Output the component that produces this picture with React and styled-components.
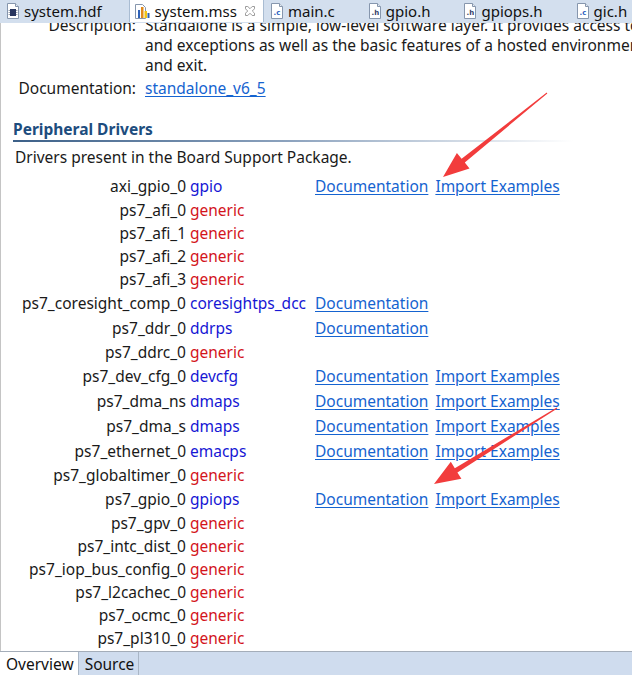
import React from "react";
import styled, { createGlobalStyle } from "styled-components";

const GlobalStyle = createGlobalStyle`
  html, body {
    margin: 0;
    padding: 0;
    background: #ffffff;
    overflow: hidden;
  }
  body {
    font-family: "Noto Sans", "Open Sans", sans-serif;
    font-size: 15px;
    color: #1a1a1a;
  }
`;

const Frame = styled.div`
  position: relative;
  width: 632px;
  height: 675px;
  display: flex;
  flex-direction: column;
  overflow: hidden;
`;

// editor tabs along the top
const TabBar = styled.div`
  height: 23px;
  flex: none;
  display: flex;
  background: #d3dfee;
  white-space: nowrap;
`;

const Tab = styled.div`
  display: flex;
  align-items: center;
  height: 22px;
  box-sizing: border-box;
  padding: ${(p) => (p.$active ? "0 8px 0 5px" : "0 26px 0 5px")};
  background: ${(p) => (p.$active ? "#ffffff" : "transparent")};
  border-left: 1px solid ${(p) => (p.$active ? "#a9bcd2" : "transparent")};
  border-right: 1px solid ${(p) => (p.$active ? "#a9bcd2" : "transparent")};
  color: #111;
  font-size: 15px;
  line-height: 22px;

  > svg {
    flex: none;
    margin-right: 4px;
  }
`;

const CloseBtn = styled.span`
  display: inline-flex;
  margin-left: 8px;
`;

// scrolled form area
const Pane = styled.div`
  flex: 1;
  overflow: hidden;
  border-left: 1px solid #c4c4c4;
  font-size: 15.5px;
`;

const Scroller = styled.div`
  margin-top: -8px;
`;

const InfoGrid = styled.div`
  display: grid;
  grid-template-columns: 135px 1fr;
  column-gap: 9px;
  line-height: 20px;
  white-space: nowrap;
`;

const InfoLabel = styled.div`
  text-align: right;
  margin-top: ${(p) => p.$gap || 0}px;
`;

const InfoValue = styled.div`
  margin-top: ${(p) => p.$gap || 0}px;
`;

const Link = styled.a`
  color: #1563d0;
  text-decoration: underline;
  text-underline-offset: 2px;
  cursor: pointer;
`;

const Section = styled.div`
  margin-top: 21px;
  padding-left: 12px;
`;

const SectionTitle = styled.div`
  font-weight: bold;
  color: #1d4d7e;
  line-height: 20px;
  padding-bottom: 1px;
`;

const TitleRule = styled.div`
  height: 2px;
  width: 560px;
  background: linear-gradient(to right, #3c6088 0%, #8ea4bf 50%, #ffffff 100%);
`;

const SectionText = styled.div`
  margin-top: 5px;
  padding-left: 2px;
  line-height: 20px;
`;

const DriverList = styled.div`
  margin-top: 6px;
`;

const DriverRow = styled.div`
  display: grid;
  grid-template-columns: 185px 121px auto;
  column-gap: 4px;
  align-items: center;
  height: ${(p) => (p.$tall ? 25 : 23)}px;
  white-space: nowrap;
`;

const Instance = styled.span`
  text-align: right;
`;

const Driver = styled.span`
  color: ${(p) => (p.$generic ? "#d3141c" : "#1616d4")};
`;

const LinkGroup = styled.span`
  display: flex;
  gap: 7px;
`;

// Overview / Source tabs at the bottom
const BottomBar = styled.div`
  height: 24px;
  flex: none;
  display: flex;
  box-sizing: border-box;
  background: #cfdcee;
  border-top: 1px solid #a4adb9;
  font-size: 15.5px;
`;

const BottomTab = styled.div`
  display: flex;
  align-items: center;
  padding: 0 4px 0 6px;
  background: ${(p) => (p.$active ? "#ffffff" : "transparent")};
  border-right: 1px solid #a9b6c6;
  color: #111;
  line-height: 22px;
`;

const Overlay = styled.svg`
  position: absolute;
  left: 0;
  top: 0;
  pointer-events: none;
  z-index: 5;
`;

const Page = ({ children }) => (
  <svg width="14" height="16" viewBox="0 0 14 16">
    <path d="M1.5 0.5h8l3 3v12h-11z" fill="#ffffff" stroke="#8696ad" />
    <path d="M9.5 0.5v3h3" fill="#e4eaf2" stroke="#8696ad" />
    {children}
  </svg>
);

const HdfIcon = () => (
  <Page>
    <rect x="4" y="6" width="6" height="7" fill="#27355f" />
    <path d="M2.5 7.5h1.5M2.5 9.5h1.5M2.5 11.5h1.5M10 7.5h1.5M10 9.5h1.5M10 11.5h1.5" stroke="#9aa3b3" />
  </Page>
);

const MssIcon = () => (
  <svg width="16" height="16" viewBox="0 0 16 16">
    <path d="M0.5 1.5h7l3 3v11h-10z" fill="#ffffff" stroke="#8696ad" />
    <rect x="3" y="7" width="2" height="8" fill="#2f62b8" />
    <rect x="6" y="4" width="2.5" height="11" fill="#e08a1c" />
    <rect x="9.5" y="8" width="2.5" height="7" fill="#f2c417" />
    <rect x="12.5" y="10" width="2" height="5" fill="#2f62b8" />
  </svg>
);

const SrcIcon = ({ ext, color }) => (
  <Page>
    <text x="3.5" y="12" fontSize="7" fontWeight="bold" fontFamily="DejaVu Sans, sans-serif" fill={color}>
      {`.${ext}`}
    </text>
  </Page>
);

const CloseIcon = () => (
  <svg width="10" height="10" viewBox="0 0 10 10">
    <polygon
      points="0.5,0.5 2.8,0.5 5,2.7 7.2,0.5 9.5,0.5 9.5,2.8 7.3,5 9.5,7.2 9.5,9.5 7.2,9.5 5,7.3 2.8,9.5 0.5,9.5 0.5,7.2 2.7,5 0.5,2.8"
      fill="#ffffff"
      stroke="#9a9a9a"
    />
  </svg>
);

const tabs = [
  { name: "system.hdf", icon: <HdfIcon /> },
  { name: "system.mss", icon: <MssIcon />, active: true },
  { name: "main.c", icon: <SrcIcon ext="c" color="#2a5fc0" /> },
  { name: "gpio.h", icon: <SrcIcon ext="h" color="#33406a" /> },
  { name: "gpiops.h", icon: <SrcIcon ext="h" color="#33406a" /> },
  { name: "gic.h", icon: <SrcIcon ext="c" color="#2a5fc0" /> },
];

// [instance, driver, documentation link, import examples link]
const drivers = [
  ["axi_gpio_0", "gpio", true, true],
  ["ps7_afi_0", "generic"],
  ["ps7_afi_1", "generic"],
  ["ps7_afi_2", "generic"],
  ["ps7_afi_3", "generic"],
  ["ps7_coresight_comp_0", "coresightps_dcc", true, false],
  ["ps7_ddr_0", "ddrps", true, false],
  ["ps7_ddrc_0", "generic"],
  ["ps7_dev_cfg_0", "devcfg", true, true],
  ["ps7_dma_ns", "dmaps", true, true],
  ["ps7_dma_s", "dmaps", true, true],
  ["ps7_ethernet_0", "emacps", true, true],
  ["ps7_globaltimer_0", "generic"],
  ["ps7_gpio_0", "gpiops", true, true],
  ["ps7_gpv_0", "generic"],
  ["ps7_intc_dist_0", "generic"],
  ["ps7_iop_bus_config_0", "generic"],
  ["ps7_l2cachec_0", "generic"],
  ["ps7_ocmc_0", "generic"],
  ["ps7_pl310_0", "generic"],
];

export default function App() {
  return (
    <>
      <GlobalStyle />
      <Frame>
        <TabBar>
          {tabs.map((t) => (
            <Tab key={t.name} $active={t.active}>
              {t.icon}
              {t.name}
              {t.active && (
                <CloseBtn>
                  <CloseIcon />
                </CloseBtn>
              )}
            </Tab>
          ))}
        </TabBar>

        <Pane>
          <Scroller>
            <InfoGrid>
              <InfoLabel>Description:</InfoLabel>
              <InfoValue>
                Standalone is a simple, low-level software layer. It provides access to basic processor features such as caches, interrupts
                <br />
                and exceptions as well as the basic features of a hosted environment, such as standard input and output, profiling, abort
                <br />
                and exit.
              </InfoValue>
              <InfoLabel $gap={3}>Documentation:</InfoLabel>
              <InfoValue $gap={3}>
                <Link>standalone_v6_5</Link>
              </InfoValue>
            </InfoGrid>

            <Section>
              <SectionTitle>Peripheral Drivers</SectionTitle>
              <TitleRule />
              <SectionText>Drivers present in the Board Support Package.</SectionText>
            </Section>

            <DriverList>
              {drivers.map(([inst, drv, doc, examples]) => (
                <DriverRow key={inst} $tall={doc}>
                  <Instance>{inst}</Instance>
                  <Driver $generic={drv === "generic"}>{drv}</Driver>
                  <LinkGroup>
                    {doc && <Link>Documentation</Link>}
                    {examples && <Link>Import Examples</Link>}
                  </LinkGroup>
                </DriverRow>
              ))}
            </DriverList>
          </Scroller>
        </Pane>

        <BottomBar>
          <BottomTab $active>Overview</BottomTab>
          <BottomTab>Source</BottomTab>
        </BottomBar>

        <Overlay width="632" height="675" viewBox="0 0 632 675">
          <polygon
            points="547.3,93.4 464.8,162.6 469.5,168.5 443,177 456.9,152.9 461.6,158.8 546.7,92.6"
            fill="#f23c3c"
          />
          <polygon
            points="557.3,408.4 457.4,472.4 461.4,478.8 434,484 450.8,461.8 454.8,468.2 556.7,407.6"
            fill="#f23c3c"
          />
        </Overlay>
      </Frame>
    </>
  );
}
